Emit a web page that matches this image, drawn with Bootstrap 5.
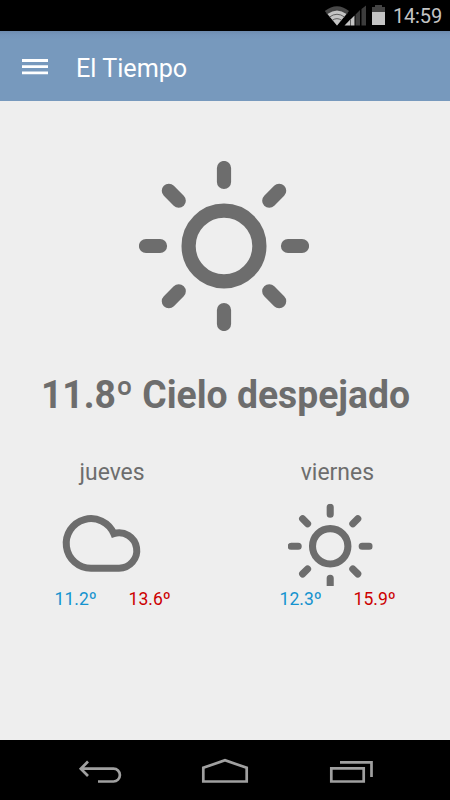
<!DOCTYPE html>
<html lang="es">
<head>
<meta charset="utf-8">
<meta name="viewport" content="width=device-width, initial-scale=1">
<title>El Tiempo</title>
<link href="https://cdn.jsdelivr.net/npm/bootstrap@5.3.0/dist/css/bootstrap.min.css" rel="stylesheet">
<style>
body { font-family: Roboto, "Liberation Sans", sans-serif; background: #eee; color: #6d6d6d; height: 800px; }
svg { display: block; flex: none; }
.status-bar { height: 31px; background: #000; color: #c4c4c4; padding: 0 8px 0 0; }
.clock { font-size: 20px; line-height: 31px; padding-top: 1px; letter-spacing: -.15px; }
.app-bar { height: 70px; background: linear-gradient(#6e8caf 0, #7596bb 4px, #7799bd 9px); padding: 2px 0 0 22px; }
.app-title { font-size: 26px; line-height: 32px; margin: 1px 0 0 28px; color: #fff; transform: scaleX(.968); transform-origin: left; }
.current { padding-top: 60px; }
.current svg { margin-right: 1.4px; }
.current-text { font-size: 38.5px; line-height: 46px; margin-top: 41px; font-weight: 700; white-space: nowrap; transform: scaleX(.969); padding-left: 1px; }
.forecast { margin-top: 40px; }
.day-name { font-size: 24px; line-height: 28px; transform: scaleX(.955); }
.day-icon { margin-top: 17px; }
.temps { font-size: 18px; line-height: 22px; margin-top: 2px; gap: 31px; }
.temps span { transform: scaleX(.975); }
.t-min { color: #1593cf; }
.t-max { color: #cc0000; }
.nav-keys { height: 60px; background: #000; }
</style>
<script src="https://cdn.jsdelivr.net/npm/bootstrap@5.3.0/dist/js/bootstrap.bundle.min.js"></script>
</head>
<body class="d-flex flex-column overflow-hidden">
<svg width="0" height="0" class="position-absolute" aria-hidden="true">
  <defs>
    <symbol id="sun" viewBox="-85 -85 170 170">
      <circle r="35.4" fill="none" stroke="#6d6d6d" stroke-width="14.2"/>
      <g stroke="#6d6d6d" stroke-width="14.2" stroke-linecap="round">
        <path d="M0-78V-64M0 78V64M-78 0H-64M78 0H64"/>
        <path d="M0-78V-64M0 78V64M-78 0H-64M78 0H64" transform="rotate(45)"/>
      </g>
    </symbol>
  </defs>
</svg>

<div class="status-bar d-flex justify-content-end align-items-center">
  <svg width="69" height="31" viewBox="324 0 69 31" aria-hidden="true">
    <path d="M324.800 11Q337 1.500 349 11L337 25.500Z" fill="#484848"/>
    <path d="M327.500 14Q337 7 346.500 14L337 25.500Z" fill="#c4c4c4"/>
    <path d="M326.500 13.500Q337 5.500 347.500 13.500M329.500 17Q337 11.500 344.500 17M332.300 20.300Q337 17 341.700 20.300" fill="none" stroke="#444" stroke-width=".8"/>
    <path d="M344.500 25.500L350 19.800V25.500Z" fill="#c4c4c4"/>
    <path d="M350.500 19.500L354.500 15.500V25.500H350.500Z" fill="#c4c4c4"/>
    <path d="M355.500 14.500L360 10V25.500H355.500ZM361.500 9L366 5.500V25.500H361.500Z" fill="#3c3c3c"/>
    <path d="M372 12V7H375V5H382V7H385V12Z" fill="#444"/>
    <path d="M372 12H385V25H372Z" fill="#c4c4c4"/>
  </svg>
  <span class="clock">14:59</span>
</div>

<header class="app-bar d-flex align-items-center">
  <svg width="26" height="16" viewBox="0 0 26 16" aria-label="Menú"><path d="M0 0H26V3H0ZM0 6.300H26V9H0ZM0 12.600H26V15.300H0Z" fill="#fff"/></svg>
  <h1 class="app-title fw-normal">El Tiempo</h1>
</header>

<main class="flex-grow-1">
  <section class="current d-flex flex-column align-items-center">
    <svg width="170" height="170" aria-label="Soleado"><use href="#sun"/></svg>
    <p class="current-text mb-0">11.8º Cielo despejado</p>
  </section>
  <section class="forecast row g-0">
    <div class="col-6 d-flex flex-column align-items-center">
      <div class="day-name">jueves</div>
      <svg class="day-icon" width="100" height="83" viewBox="63 503 100 83" aria-label="Nublado" overflow="visible">
        <path d="M91 568.200A24.800 24.800 0 1 1 113.800 533.600A17.700 17.700 0 1 1 119 568.200Z" fill="none" stroke="#6d6d6d" stroke-width="7"/>
      </svg>
      <div class="temps d-flex"><span class="t-min">11.2º</span><span class="t-max">13.6º</span></div>
    </div>
    <div class="col-6 d-flex flex-column align-items-center">
      <div class="day-name">viernes</div>
      <svg class="day-icon" width="100" height="83" viewBox="0 0 100 83" aria-label="Soleado"><use href="#sun" x="-.3" y=".8" width="85" height="85"/></svg>
      <div class="temps d-flex"><span class="t-min">12.3º</span><span class="t-max">15.9º</span></div>
    </div>
  </section>
</main>

<nav class="nav-keys">
  <svg width="450" height="60" viewBox="0 740 450 60" fill="none" stroke="#a0a0a0" stroke-width="2.700" aria-hidden="true">
    <path d="M98 781.500H113.500A6.400 6.400 0 0 0 113.500 768.700H81.500M88 761.500L80.800 768.700L88 776"/>
    <path d="M203.300 781.500V767.800L225 760.300L246.700 767.800V781.500Z"/>
    <path d="M331.300 768.300H363.700V781.500H331.300ZM340 762.300H371.500V777"/>
  </svg>
</nav>
</body>
</html>
